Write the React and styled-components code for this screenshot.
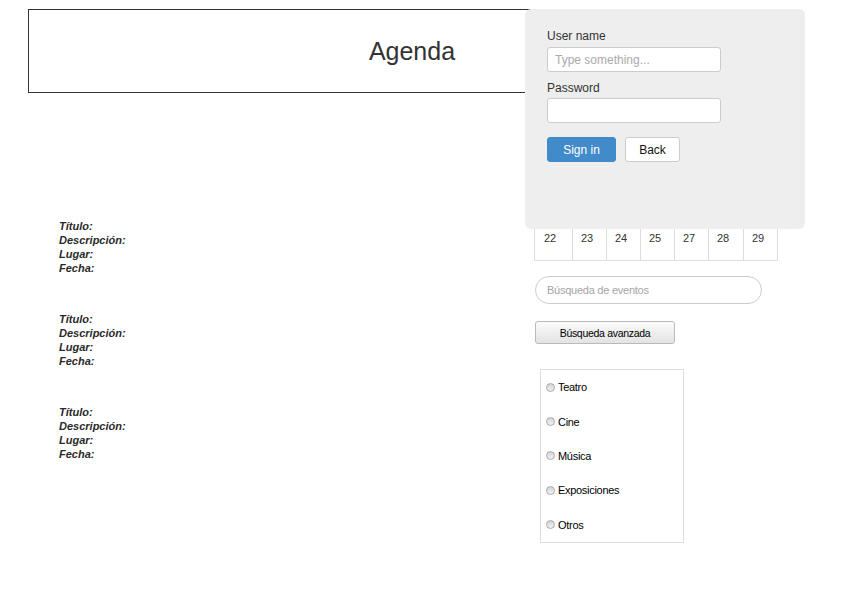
import React from "react";
import styled, { createGlobalStyle } from "styled-components";

const GlobalStyle = createGlobalStyle`
  html, body { margin: 0; padding: 0; background: #fff; }
  body { font-family: "Liberation Sans", Arial, sans-serif; color: #333; }
  * { box-sizing: border-box; }
`;

const Page = styled.div`
  position: relative;
  width: 846px;
  min-height: 610px;
  padding: 9px 0 0 28px;
`;

const Header = styled.header`
  width: 768px;
  height: 84px;
  border: 1px solid #333;
  display: flex;
  align-items: center;
  justify-content: center;
`;

const Title = styled.h1`
  margin: 0;
  font-size: 25px;
  font-weight: normal;
  color: #333;
`;

const Content = styled.div`
  display: flex;
  align-items: flex-start;
`;

const EventList = styled.section`
  width: 506px;
  padding: 126px 0 0 31px;
  display: flex;
  flex-direction: column;
  gap: 37px;
`;

const EventItem = styled.div`
  display: flex;
  flex-direction: column;
`;

const EventField = styled.span`
  font-size: 11px;
  line-height: 14px;
  font-weight: bold;
  font-style: italic;
  color: #2a2a2a;
`;

const Sidebar = styled.aside`
  padding-top: 105px;
  display: flex;
  flex-direction: column;
  align-items: flex-start;
`;

const Calendar = styled.div`
  display: grid;
  grid-template-columns: 37px 33px 33px 33px 33px 34px 33px;
  grid-template-rows: 25px 35px;
  gap: 1px;
  padding: 1px;
  background: #ddd;
`;

const DayCell = styled.div`
  background: #fff;
  font-size: 11px;
  line-height: 15px;
  color: #333;
  padding: 6px 0 0 8px;
  font-weight: ${(p) => (p.$head ? "bold" : "normal")};
  &:nth-child(7n + 1) { padding-left: 9px; }
`;

const SearchInput = styled.input`
  margin: 15px 0 0 1px;
  width: 227px;
  height: 28px;
  border: 1px solid #ccc;
  border-radius: 14px;
  padding: 0 0 0 11px;
  font-family: inherit;
  font-size: 11px;
  letter-spacing: -0.25px;
  color: #333;
  background: #fff;
  outline: none;
  &::placeholder { color: #a5a5a5; }
`;

const AdvancedButton = styled.button`
  margin: 17px 0 0 1px;
  width: 140px;
  height: 23px;
  border: 1px solid #bababa;
  border-radius: 3px;
  background: linear-gradient(#fbfbfb, #e3e3e3);
  font-family: inherit;
  font-size: 10.5px;
  letter-spacing: -0.3px;
  color: #000;
  padding: 0;
  cursor: pointer;
`;

const CategoryBox = styled.fieldset`
  margin: 25px 0 0 6px;
  width: 144px;
  height: 174px;
  border: 1px solid #ddd;
  padding: 0 0 0 5px;
  display: flex;
  flex-direction: column;
`;

const CategoryRow = styled.label`
  height: 34.4px;
  display: flex;
  align-items: center;
  gap: 3px;
  font-size: 11px;
  letter-spacing: -0.3px;
  color: #000;
`;

const Radio = styled.input.attrs({ type: "radio" })`
  appearance: none;
  -webkit-appearance: none;
  margin: 0;
  width: 9px;
  height: 9px;
  border-radius: 50%;
  border: 1px solid #a9a9a9;
  background: linear-gradient(#d4d4d4, #f3f3f3);
`;

const LoginPanel = styled.form`
  position: absolute;
  top: 9px;
  left: 525px;
  width: 280px;
  height: 220px;
  background: #eeeeee;
  border-radius: 6px;
  padding: 19px 0 0 22px;
  display: flex;
  flex-direction: column;
  align-items: flex-start;
`;

const FieldLabel = styled.label`
  font-size: 12px;
  line-height: 16px;
  color: #333;
  margin: ${(p) => (p.$first ? "0 0 3px" : "8px 0 2px")};
`;

const TextInput = styled.input`
  width: 174px;
  height: 25px;
  border: 1px solid #ccc;
  border-radius: 3px;
  background: #fff;
  padding: 0 0 0 7px;
  font-family: inherit;
  font-size: 12px;
  color: #333;
  outline: none;
  &::placeholder { color: #aaa; }
`;

const ButtonRow = styled.div`
  display: flex;
  gap: 9px;
  margin-top: 14px;
`;

const PanelButton = styled.button`
  height: 25px;
  width: ${(p) => p.$w}px;
  border-radius: 3px;
  border: 1px solid ${(p) => (p.$primary ? "#428bca" : "#ccc")};
  background: ${(p) => (p.$primary ? "#428bca" : "#fff")};
  color: ${(p) => (p.$primary ? "#fff" : "#111")};
  font-family: inherit;
  font-size: 12px;
  padding: 0;
  cursor: pointer;
`;

const weekdays = ["L", "M", "X", "J", "V", "S", "D"];
const days = [22, 23, 24, 25, 27, 28, 29];
const categories = ["Teatro", "Cine", "Música", "Exposiciones", "Otros"];
const fields = ["Título:", "Descripción:", "Lugar:", "Fecha:"];

export default function App() {
  return (
    <>
      <GlobalStyle />
      <Page>
        <Header>
          <Title>Agenda</Title>
        </Header>
        <Content>
          <EventList>
            {[0, 1, 2].map((i) => (
              <EventItem key={i}>
                {fields.map((f) => (
                  <EventField key={f}>{f}</EventField>
                ))}
              </EventItem>
            ))}
          </EventList>
          <Sidebar>
            <Calendar>
              {weekdays.map((d) => (
                <DayCell key={d} $head>
                  {d}
                </DayCell>
              ))}
              {days.map((d) => (
                <DayCell key={d}>{d}</DayCell>
              ))}
            </Calendar>
            <SearchInput placeholder="Búsqueda de eventos" />
            <AdvancedButton type="button">Búsqueda avanzada</AdvancedButton>
            <CategoryBox>
              {categories.map((c) => (
                <CategoryRow key={c}>
                  <Radio name="categoria" />
                  {c}
                </CategoryRow>
              ))}
            </CategoryBox>
          </Sidebar>
        </Content>
        <LoginPanel onSubmit={(e) => e.preventDefault()}>
          <FieldLabel $first>User name</FieldLabel>
          <TextInput placeholder="Type something..." />
          <FieldLabel>Password</FieldLabel>
          <TextInput type="password" />
          <ButtonRow>
            <PanelButton $primary $w={69} type="submit">
              Sign in
            </PanelButton>
            <PanelButton $w={55} type="button">
              Back
            </PanelButton>
          </ButtonRow>
        </LoginPanel>
      </Page>
    </>
  );
}
